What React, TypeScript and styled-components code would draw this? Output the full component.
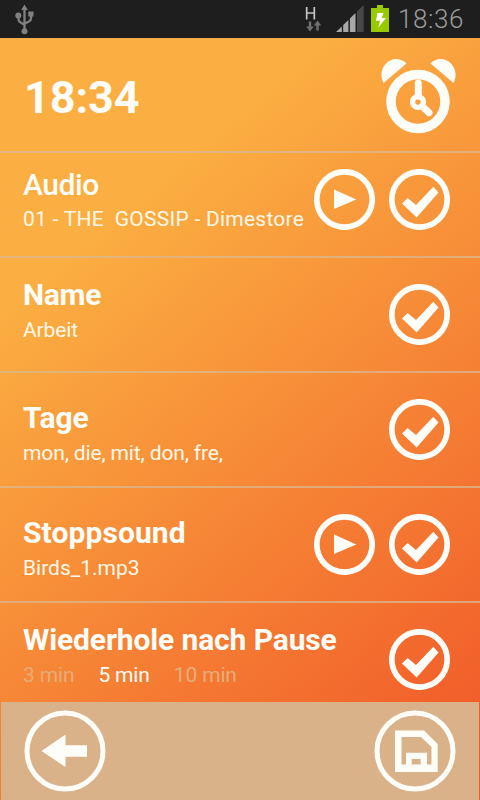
import React from "react";
import styled, { createGlobalStyle } from "styled-components";

const GlobalStyle = createGlobalStyle`
  * { box-sizing: border-box; }
  body { margin: 0; background: #1e1e1e; font-family: Roboto, "Open Sans", sans-serif; }
`;

const Screen = styled.div`
  display: flex;
  flex-direction: column;
  width: 480px;
  height: 800px;
  overflow: hidden;
  color: #fffdf8;
`;

const StatusBar = styled.div`
  display: flex;
  align-items: flex-start;
  height: 38px;
  flex: none;
  padding: 0 14px 0 15px;
  background: #1e1e1e;
`;

const StatusIcons = styled.div`
  display: flex;
  margin-left: auto;
`;

const StatusTime = styled.span`
  width: 68px;
  margin-left: 7px;
  font-size: 26px;
  line-height: 38px;
  font-weight: 300;
  letter-spacing: 0.6px;
  color: #9c9c9c;
  white-space: nowrap;
`;

const Body = styled.main`
  display: flex;
  flex-direction: column;
  flex: 1;
  min-height: 0;
  background: linear-gradient(140deg, #fbaf42 0%, #fbaf42 23%, #f15a29 95%);
`;

const List = styled.div`
  height: 664px;
  overflow: hidden;
`;

const Header = styled.header`
  display: flex;
  justify-content: space-between;
  height: 115px;
  padding: 0 23px 0 24px;
  border-bottom: 2px solid rgba(218, 184, 145, 0.75);
`;

const AlarmTime = styled.h1`
  margin: 0;
  font-size: 45px;
  line-height: 120px;
  font-weight: 700;
  letter-spacing: -0.1px;
`;

const Row = styled.section<{ $height: number; $top: number }>`
  display: flex;
  justify-content: space-between;
  height: ${(p) => p.$height}px;
  padding: 0 30px 0 23px;
  border-bottom: 2px solid rgba(218, 184, 145, 0.75);

  & > :first-child {
    padding-top: ${(p) => p.$top}px;
  }
`;

const Labels = styled.div`
  white-space: pre;
`;

const Title = styled.h2<{ $medium?: boolean; $spacing?: number }>`
  margin: 0 0 ${(p) => (p.$medium ? -1 : 0)}px;
  padding-top: ${(p) => (p.$medium ? 1 : 0)}px;
  font-size: 30px;
  line-height: 38px;
  font-weight: ${(p) => (p.$medium ? 500 : 700)};
  letter-spacing: ${(p) => p.$spacing ?? 0}px;
`;

const Detail = styled.div<{ $spacing?: number }>`
  display: flex;
  gap: 24px;
  font-size: 21px;
  line-height: 32px;
  letter-spacing: ${(p) => p.$spacing ?? 0}px;
  color: #fff8e8;
`;

const Choice = styled.span<{ $active?: boolean }>`
  color: ${(p) => (p.$active ? "#fffdf8" : "#e6ad78")};
`;

const Actions = styled.div<{ $offset: number }>`
  display: flex;
  gap: 14px;
  padding-top: ${(p) => p.$offset}px;
`;

const Footer = styled.footer`
  display: flex;
  justify-content: space-between;
  height: 98px;
  margin: 0 1px;
  padding: 8px 23px;
  background: #dab28a;
`;

const PlainButton = styled.button`
  display: block;
  height: fit-content;
  padding: 0;
  border: 0;
  background: none;
  color: #fffdf8;
`;

const Glyph = styled.svg`
  display: block;
`;

const UsbIcon = () => (
  <Glyph width="20" height="36" viewBox="15 0 20 36" fill="#808080" stroke="#808080">
    <path d="M24.5 8V31M18.5 16v3.5q0 2 2.2 3l3.8 2.2M31 14v4.5q0 2-2.2 3l-4.3 2.2" fill="none" strokeWidth="2.3" />
    <path d="M24.5 4.5l3.3 5.5h-6.600z" stroke="none" />
    <circle cx="18.300" cy="15.500" r="3" stroke="none" />
    <rect x="28.300" y="11.500" width="5.200" height="5" stroke="none" />
    <circle cx="24.500" cy="31.200" r="3" stroke="none" />
  </Glyph>
);

const NetworkIcons = () => (
  <Glyph width="90" height="36" viewBox="301 0 90 36">
    <path d="M306.700 7v12.500M314.300 7v12.500M306.700 13h7.600" stroke="#c4c4c4" strokeWidth="1.700" fill="none" />
    <path d="M310 21.500v6.500M317.500 24v6.500" stroke="#707070" strokeWidth="2.400" />
    <path d="M306.300 26.500h7.400l-3.700 5zM313.800 25.500h7.400l-3.700-5z" fill="#707070" />
    <path d="M336 32l5.800-5.500V32z" fill="#a8a8a8" />
    <path d="M343.200 25l5.200-5V32h-5.200z" fill="#a8a8a8" />
    <path d="M349.900 18.500l5.600-5.500v19h-5.600z" fill="#a8a8a8" />
    <path d="M357 11.500l6.700-6.500v27H357z" fill="#484848" />
    <path d="M371 8h6V5h6v3h6v24h-18z" fill="#99cc00" />
    <path d="M377.500 13h6l-1.800 5h4.300l-7.700 9.500 1.800-6.700H376z" fill="#fff" />
  </Glyph>
);

const AlarmClockIcon = () => (
  <Glyph width="76" height="113" viewBox="381 38 76 113" fill="none" stroke="#fffdf8">
    <circle cx="418" cy="101.500" r="27" strokeWidth="9.500" />
    <path d="M418.300 83v13M423 107l6 5.800" strokeWidth="7" strokeLinecap="round" />
    <circle cx="418" cy="102" r="5.400" strokeWidth="5.400" />
    <path d="M383.500 83C377 70 387 59 396 59q6.500 0 10.500 4.500zM453.500 83C460 70 450 59 441 59q-6.500 0-10.500 4.500z" fill="#fffdf8" stroke="none" />
  </Glyph>
);

const PlayIcon = () => (
  <Glyph width="61" height="61" viewBox="0 0 61 61">
    <circle cx="30.500" cy="30.500" r="27.700" fill="none" stroke="currentColor" strokeWidth="5.700" />
    <path d="M20 20.500l22.300 9.900L20 40z" fill="currentColor" />
  </Glyph>
);

const CheckIcon = () => (
  <Glyph width="61" height="61" viewBox="0 0 61 61">
    <circle cx="30.500" cy="30.500" r="27.700" fill="none" stroke="currentColor" strokeWidth="5.700" />
    <path d="M13 34.500l5.600-5.600 8.400 7.100 17.300-18.200 5.200 5.600-21.800 25z" fill="currentColor" />
  </Glyph>
);

const BackIcon = () => (
  <Glyph width="82" height="82" viewBox="24 710 82 82">
    <circle cx="65" cy="751" r="38" fill="none" stroke="currentColor" strokeWidth="5" />
    <path d="M41.500 751l24-16.500v10.800H87v11.500H65.500V767z" fill="currentColor" />
  </Glyph>
);

const SaveIcon = () => (
  <Glyph width="82" height="82" viewBox="374 710 82 82">
    <circle cx="415" cy="751" r="38" fill="none" stroke="currentColor" strokeWidth="5" />
    <path
      d="M395 730.500h29l13.700 13.500v28H395zM401.500 737v27.500h4.500v-11.800h21v11.800h4.500V747L421 737zM411.700 759v5.500h9V759z"
      fill="currentColor"
      fillRule="evenodd"
    />
  </Glyph>
);

interface SettingProps {
  title: string;
  height?: number;
  top: number;
  offset?: number;
  playable?: boolean;
  medium?: boolean;
  titleSpacing?: number;
  detailSpacing?: number;
  children: React.ReactNode;
}

const Setting = ({ title, height = 115, top, offset = 26, playable, medium, titleSpacing, detailSpacing, children }: SettingProps) => (
  <Row $height={height} $top={top}>
    <Labels>
      <Title $medium={medium} $spacing={titleSpacing}>{title}</Title>
      <Detail $spacing={detailSpacing}>{children}</Detail>
    </Labels>
    <Actions $offset={offset}>
      {playable && (
        <PlainButton aria-label="Play">
          <PlayIcon />
        </PlainButton>
      )}
      <PlainButton aria-label="Toggle">
        <CheckIcon />
      </PlainButton>
    </Actions>
  </Row>
);

export default function App() {
  return (
    <>
      <GlobalStyle />
      <Screen>
        <StatusBar>
          <UsbIcon />
          <StatusIcons>
            <NetworkIcons />
            <StatusTime>18:36</StatusTime>
          </StatusIcons>
        </StatusBar>
        <Body>
          <List>
            <Header>
              <AlarmTime>18:34</AlarmTime>
              <AlarmClockIcon />
            </Header>
            <Setting title="Audio" height={105} top={12} offset={16} playable medium titleSpacing={-0.4} detailSpacing={0.25}>
              {"01 - THE  GOSSIP - Dimestore"}
            </Setting>
            <Setting title="Name" top={18} titleSpacing={-0.3} detailSpacing={-0.1}>Arbeit</Setting>
            <Setting title="Tage" top={26} detailSpacing={-0.12}>mon, die, mit, don, fre,</Setting>
            <Setting title="Stoppsound" top={26} playable titleSpacing={0.1}>Birds_1.mp3</Setting>
            <Setting title="Wiederhole nach Pause" top={18} titleSpacing={-0.12} detailSpacing={-0.15}>
              <Choice>3 min</Choice>
              <Choice $active>5 min</Choice>
              <Choice>10 min</Choice>
            </Setting>
          </List>
          <Footer>
            <PlainButton aria-label="Back">
              <BackIcon />
            </PlainButton>
            <PlainButton aria-label="Save">
              <SaveIcon />
            </PlainButton>
          </Footer>
        </Body>
      </Screen>
    </>
  );
}
